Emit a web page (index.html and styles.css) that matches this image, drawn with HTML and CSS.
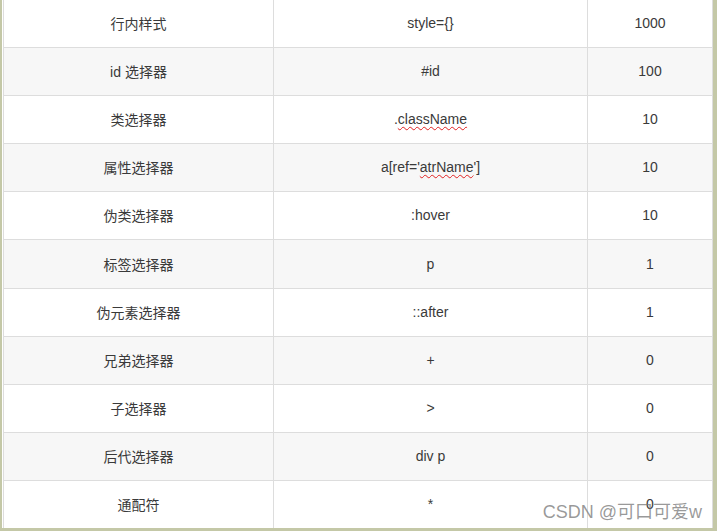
FILE: index.html
```html
<!DOCTYPE html>
<html lang="zh">
<head>
<meta charset="utf-8">
<title>选择器权重</title>
<link rel="stylesheet" href="styles.css">
</head>
<body>
<div class="frame">
  <div class="grid">
    <div class="row"><div class="cell c1">行内样式</div><div class="cell c2">style={}</div><div class="cell c3">1000</div></div>
    <div class="row alt"><div class="cell c1">id 选择器</div><div class="cell c2">#id</div><div class="cell c3">100</div></div>
    <div class="row"><div class="cell c1">类选择器</div><div class="cell c2">.<span class="spell">className</span></div><div class="cell c3">10</div></div>
    <div class="row alt"><div class="cell c1">属性选择器</div><div class="cell c2">a[ref='<span class="spell">atrName</span>']</div><div class="cell c3">10</div></div>
    <div class="row"><div class="cell c1">伪类选择器</div><div class="cell c2">:hover</div><div class="cell c3">10</div></div>
    <div class="row alt"><div class="cell c1">标签选择器</div><div class="cell c2">p</div><div class="cell c3">1</div></div>
    <div class="row"><div class="cell c1">伪元素选择器</div><div class="cell c2">::after</div><div class="cell c3">1</div></div>
    <div class="row alt"><div class="cell c1">兄弟选择器</div><div class="cell c2">+</div><div class="cell c3">0</div></div>
    <div class="row"><div class="cell c1">子选择器</div><div class="cell c2">&gt;</div><div class="cell c3">0</div></div>
    <div class="row alt"><div class="cell c1">后代选择器</div><div class="cell c2">div p</div><div class="cell c3">0</div></div>
    <div class="row"><div class="cell c1">通配符</div><div class="cell c2">*</div><div class="cell c3">0</div></div>
  </div>
  <div class="watermark">CSDN @可口可爱w</div>
</div>
</body>
</html>
```
FILE: styles.css
```css
html, body {
  margin: 0;
  padding: 0;
  background: #ffffff;
}
.frame {
  position: relative;
  box-sizing: border-box;
  width: 717px;
  height: 531px;
  border-left: 2px solid #c4c8a7;
  border-right: 4px solid #c4c8a7;
  border-bottom: 3px solid #c4c8a7;
  padding-left: 1px;
  overflow: hidden;
  font-family: "Liberation Sans", "Noto Sans CJK SC", sans-serif;
  font-size: 14px;
  color: #3a3a3a;
}
.grid {
  display: flex;
  flex-direction: column;
  border-left: 1px solid #dddddd;
}
.row {
  display: grid;
  grid-template-columns: 270px 314px 125px;
  height: 48.1px;
  box-sizing: border-box;
  border-bottom: 1px solid #dddddd;
  background: #ffffff;
}
.row.alt {
  background: #f7f7f7;
}
.cell {
  display: flex;
  align-items: center;
  justify-content: center;
  padding-bottom: 1px;
  border-right: 1px solid #dddddd;
  white-space: pre;
}
.spell {
  text-decoration: underline wavy #e02020;
  text-decoration-thickness: 1px;
  text-underline-offset: 2px;
}
.watermark {
  position: absolute;
  right: 11px;
  bottom: 5px;
  font-size: 18px;
  color: rgba(120, 120, 120, 0.75);
  font-family: "Liberation Sans", "Noto Sans CJK SC", sans-serif;
}
```
